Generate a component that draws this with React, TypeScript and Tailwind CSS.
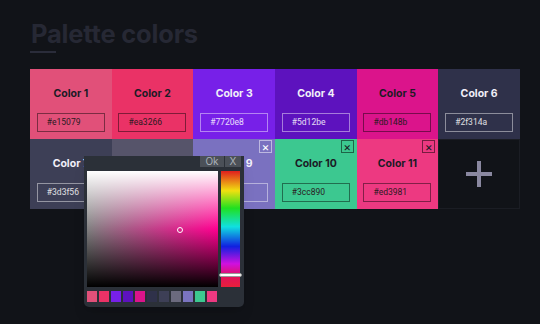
import React from 'react';

type Tile = {name: string; hex: string; light: boolean; closable?: boolean};

const TILES: Tile[] = [
  {name: 'Color 1', hex: '#e15079', light: true},
  {name: 'Color 2', hex: '#ea3266', light: true},
  {name: 'Color 3', hex: '#7720e8', light: false},
  {name: 'Color 4', hex: '#5d12be', light: false},
  {name: 'Color 5', hex: '#db148b', light: true},
  {name: 'Color 6', hex: '#2f314a', light: false},
  {name: 'Color 7', hex: '#3d3f56', light: false},
  {name: 'Color 8', hex: '#56546a', light: false},
  {name: 'Color 9', hex: '#7a71c0', light: false, closable: true},
  {name: 'Color 10', hex: '#3cc890', light: true, closable: true},
  {name: 'Color 11', hex: '#ed3981', light: true, closable: true},
];

const SWATCHES = [
  '#e15079',
  '#ea3266',
  '#7720e8',
  '#5d12be',
  '#db148b',
  '#2f314a',
  '#3d3f56',
  '#6b6a7e',
  '#7a74c0',
  '#3cc890',
  '#ed3981',
];

function ColorTile({tile}: {tile: Tile}) {
  return (
    <div
      className="relative h-[70px] flex flex-col items-center pt-[20px]"
      style={{backgroundColor: tile.hex}}>
      {tile.closable && (
        <button
          className={`absolute top-[1px] right-[3px] w-[13px] h-[13px] border flex items-center justify-center text-[12px] leading-none ${
            tile.light
              ? 'border-black/50 text-[#1b1b25]'
              : 'border-white/50 text-white'
          }`}>
          ×
        </button>
      )}
      <div
        className={`text-[10.5px] font-bold leading-none ${
          tile.light ? 'text-[#1b1b25]' : 'text-[#f1eff9]'
        }`}>
        {tile.name}
      </div>
      <div
        className={`mt-[13px] w-[68px] h-[19px] border flex items-center pl-[9px] text-[8.5px] ${
          tile.light
            ? 'border-black/45 text-[#2a1a22]'
            : 'border-white/45 text-white/85'
        }`}
        style={{fontFamily: 'Roboto, sans-serif'}}>
        {tile.hex}
      </div>
    </div>
  );
}

function ColorPicker() {
  return (
    <div className="absolute left-[54px] top-[87px] w-[160px] h-[151px] bg-[#2b3038] rounded-b-[5px] shadow-lg">
      <div className="h-[15px] flex justify-end items-start gap-[1px] pr-[3px]">
        <button className="w-[24px] h-[11px] bg-[#4b5058] text-[#aab0b8] text-[10px] leading-[11px]">
          Ok
        </button>
        <button className="w-[16px] h-[11px] bg-[#4b5058] text-[#aab0b8] text-[10px] leading-[11px]">
          X
        </button>
      </div>
      <div className="flex gap-[3px] pl-[3px]">
        <div className="relative w-[131px] h-[116px] bg-[linear-gradient(to_right,#808080,#ff0090)]">
          <div className="absolute inset-0 bg-[linear-gradient(to_bottom,#ffffff,rgba(255,255,255,0)_50%,rgba(0,0,0,0)_50%,#000000)]" />
          <div className="absolute left-[90px] top-[56px] w-[6px] h-[6px] rounded-full border-[1.5px] border-white" />
        </div>
        <div className="relative w-[19px] h-[116px] bg-[linear-gradient(to_bottom,#e01e1e,#f0e010_17%,#20e020_32%,#10e0e0_48%,#1020e0_65%,#d010e0_80%,#e01060_90%,#e8203a)]">
          <div className="absolute -left-[2px] top-[102px] w-[23px] h-[4px] rounded-full bg-white border border-[#999]" />
        </div>
      </div>
      <div className="flex gap-[2px] pl-[3px] mt-[4px]">
        {SWATCHES.map((c) => (
          <div key={c} className="w-[10px] h-[11px]" style={{backgroundColor: c}} />
        ))}
      </div>
    </div>
  );
}

export default function App() {
  return (
    <div
      className="w-[540px] h-[324px] bg-[#111318] pl-[30px] pr-[20px] pt-[18px] overflow-hidden"
      style={{fontFamily: 'Inter, sans-serif'}}>
      {/* Header */}
      <h1 className="text-[25.5px] font-bold text-[#262834] leading-[32px] tracking-[-0.2px] pl-[1px]">
        Palette colors
      </h1>
      <div className="w-[26px] h-[2px] bg-[#2a2c3a] mt-[1px]" />

      <div className="relative mt-[16px] grid grid-cols-6">
        {TILES.map((t) => (
          <ColorTile key={t.name} tile={t} />
        ))}
        <div className="h-[70px] border border-[#1b1d24] flex items-center justify-center">
          <div className="relative w-[26px] h-[26px]">
            <div className="absolute left-0 top-[11px] w-[26px] h-[4px] bg-[#8a88a0]" />
            <div className="absolute left-[11px] top-0 w-[4px] h-[26px] bg-[#8a88a0]" />
          </div>
        </div>
        <ColorPicker />
      </div>
    </div>
  );
}
